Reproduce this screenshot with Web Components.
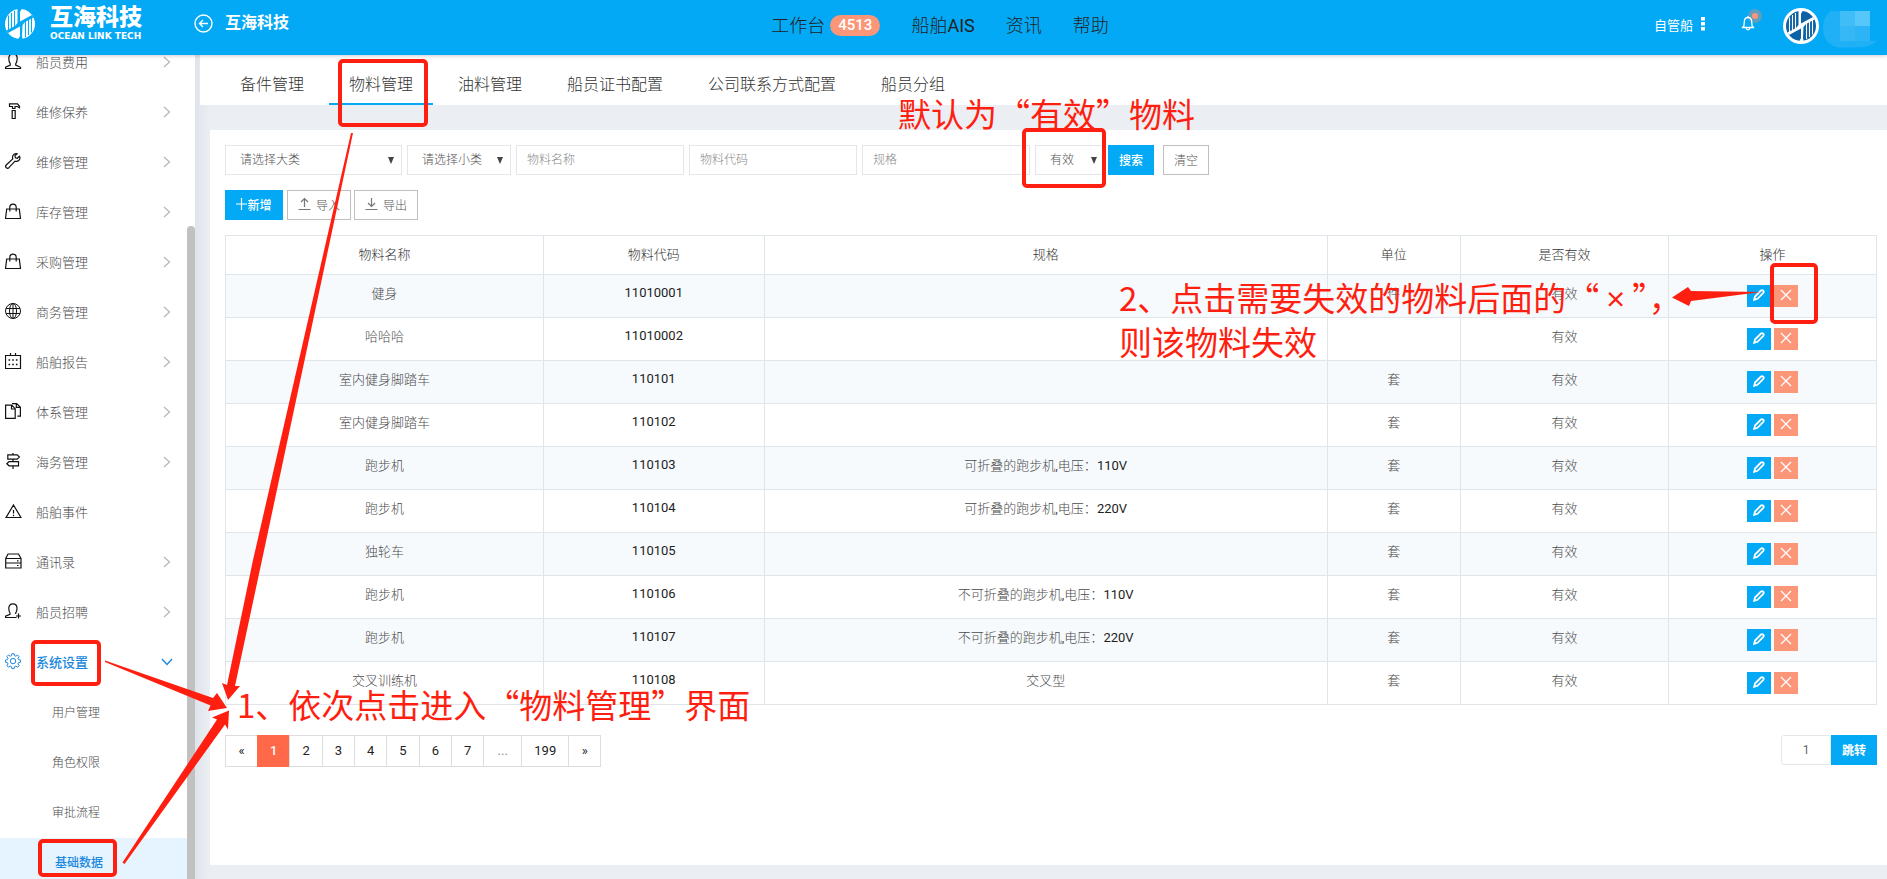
<!DOCTYPE html>
<html lang="zh-CN">
<head>
<meta charset="utf-8">
<title>互海科技</title>
<style>
  html, body { margin: 0; height: 100%; }
  body {
    --strong: Roboto, "Noto Sans CJK SC", sans-serif;
    position: relative;
    font-family: Roboto, "Noto Sans CJK SC Light", "Noto Sans CJK SC", sans-serif;
    font-size: 13px;
    color: #4c4c4c;
    background: #ebeff4;
    overflow: hidden;
  }
</style>
</head>
<body>
<ocean-app></ocean-app>
<note-layer></note-layer>

<script>
const define = (name, html, setup) => {
  const template = document.createElement('template');
  template.innerHTML = '<style>*{box-sizing:border-box}button,input,select{font:inherit;color:inherit;margin:0}a{color:inherit;text-decoration:none}</style>' + html;
  customElements.define(name, class extends HTMLElement {
    constructor() {
      super();
      this.attachShadow({ mode: 'open' }).append(template.content.cloneNode(true));
    }
    connectedCallback() { if (setup) setup(this, this.shadowRoot); }
  });
};

const ICONS = {
  user: '<path d="M.5 15.500v-1.200l4.800-2.200v-1.300C4.200 9.500 3.800 7.500 3.800 5.500 3.800 2.500 5.300.8 8 .8s4.200 1.700 4.200 4.700c0 2-.4 4-1.500 5.300v1.300l4.800 2.200v1.200z"/>',
  hammer: '<path d="M4.500.8h8l2 2.500v1.500l-2.200-1.300H10v2H7.500v-2h-3zM7.200 7.500h3v8h-3z"/>',
  wrench: '<path d="M14.500 3.200l-2.300 2.100-1.800-.6-.5-1.800L12.200.8C10 .2 7.600 1.700 7.500 4.200c0 .7.1 1.200.3 1.700L1.200 12c-1.700 1.800.9 4.400 2.700 2.700L10 8.200c3 .9 6-1.700 4.500-5z"/>',
  bag: '<path d="M1.700 6h12.600l1.200 9.500H.5zM4.800 8.500V4.300a3.200 3.200 0 0 1 6.400 0v4.200"/>',
  globe: '<g stroke-width="1"><circle cx="8" cy="8" r="7.500"/><ellipse cx="8" cy="8" rx="3.500" ry="7.500"/><path d="M8 .5v15M1.200 5.500h13.600M1.200 10.500h13.600"/></g>',
  calendar: '<path d="M.5 2.500h15v13H.5zM5.500 0v2.500M10.500 0v2.500"/><path stroke-width="1.600" d="M3.500 7h1.600m2.100 0h1.600m2.100 0h1.600M3.500 11.500h1.600m2.100 0h1.600m2.100 0h1.600"/>',
  files: '<path d="M.6 2.200h6.200l3.400 3.500v9.700H.6zM6.500 2.200v3.800h3.700M7 .6h4.700l3.700 3.600v9h-3M11.300.8v3.600h4"/>',
  sign: '<path d="M2.800 1.800h9.400l2.200 2.200-2.200 2.200H2.800zM13.500 8.600H4L1.800 10.700 4 12.800h9.500zM8 0v1.800M8 6.200v2.400M8 12.800V16"/>',
  warn: '<path d="M8.500 2l7.400 12.500H1.100zM8.500 7v3.500M8.500 11.800v1.400"/>',
  server: '<path d="M.7 5.500L3 1h10.500L16 5.500M.7 5.500H16v4.500H.7zM.7 10H16v5H.7zM12 7.800h1.500M12 12.500h1.500"/>',
  recruit: '<path d="M11.500 14.500H.5v-1.200l4.500-2V10C4.200 9 3.800 7.200 3.800 5.300 3.800 2.600 5.200.8 7.900.8S12 2.600 12 5.300c0 1.900-.4 3.500-1.300 4.600v1.200M13.500 10.500v5M11 13h5"/>',
  gear: '<path d="M6.900.7h2.200l.5 2 1.200.5 1.800-1.100 1.500 1.500L13 5.400l.5 1.200 2 .5v2.100l-2 .5-.5 1.200 1.100 1.800-1.500 1.500-1.800-1.100-1.200.5-.5 2H6.900l-.5-2-1.200-.5-1.800 1.100-1.500-1.500L3 10.900l-.5-1.200-2-.5V7.100l2-.5L3 5.400 1.900 3.600l1.500-1.500 1.800 1.100 1.200-.5z"/><circle cx="8" cy="8.100" r="2.700"/>'
};

/* Round company mark: striped halves with an S-shaped channel between them */
const MARK = (bg, fg) => `<circle cx="15" cy="15" r="15" fill="${bg}"/>
  <path fill="none" stroke="${fg}" stroke-width="1.100" d="M3.500 6.500v16M6.500 4v17M9.500 2v17.500M26.500 23.500v-16M23.500 26V9M20.500 28V10.500"/>
  <path fill="${fg}" d="M12.500 0h4L15 3v9.500L27 6l1.500 2.500L20 13l-2.500 3-.5 11 .5 3h-4l1.500-3v-9.500L3 24l-1.500-2.500L10 17l2.500-3z"/>`;

define('ocean-app', `
<style>
  :host { display: grid; grid-template-rows: 55px 1fr; height: 100%; }
  .body { display: grid; grid-template-columns: 195px 1fr; min-height: 0; }
  main { display: flex; flex-direction: column; min-width: 0;
    background: linear-gradient(90deg, #dfe4ea, #ebeff4 15px); }
  .panel { flex: 1; margin: 25px 0 14px 15px; padding: 15px 10px 0 15px; background: #fff; }
</style>
<app-header></app-header>
<div class="body">
  <side-menu></side-menu>
  <main>
    <tab-bar></tab-bar>
    <section class="panel">
      <filter-bar></filter-bar>
      <action-bar></action-bar>
      <material-table></material-table>
      <page-nav></page-nav>
    </section>
  </main>
</div>`);

define('app-header', `
<style>
  :host { position: relative; z-index: 1; display: grid; grid-template-columns: 1fr auto 1fr; padding-right: 7px;
    background: #03a9f5; box-shadow: 0 1px 4px rgba(0,0,0,.2); color: #fff; }
  .left, nav, .right { display: flex; align-items: center; height: 48px; }
  .left, .right { font-family: var(--strong); }
  .logo { display: flex; align-items: center; gap: 15px; width: 190px; padding-left: 5px; }
  .brand { display: flex; flex-direction: column; font-weight: 900; font-size: 23px; line-height: 24px; }
  .brand small { font: bold 9px/12px "DejaVu Sans", sans-serif; white-space: nowrap; }
  .back { display: flex; align-items: center; gap: 12px; padding-left: 4px; font-size: 16px; font-weight: bold; line-height: 20px; padding-bottom: 2px; }
  nav { gap: 31px; font-size: 18px; color: #222; }
  nav a { display: flex; align-items: center; gap: 5px; }
  .badge { padding: 0 8px; border-radius: 11px; background: #fb9678; color: #fff; font-size: 15px; line-height: 21px; font-weight: 500; margin-top: 2px; }
  .right { justify-content: flex-end; }
  .fleet { display: flex; align-items: center; gap: 8px; padding: 0; border: 0; background: none; }
  .bell { padding: 0; border: 0; background: none; margin: 0 20px 0 36px; height: 32px; }
  .name { display: block; margin: 10px 0 0 4px; }
  .avatar { margin-top: 4px; }
  svg { display: block; }
</style>
<div class="left">
  <div class="logo">
    <svg width="30" height="30" viewBox="0 0 30 30">${MARK('#fff', '#03a9f5')}</svg>
    <div class="brand">互海科技<small>OCEAN LINK TECH</small></div>
  </div>
  <a class="back" href="#">
    <svg width="19" height="19" fill="none" stroke="#fff" stroke-width="1.400"><circle cx="9.500" cy="9.500" r="8.500"/><path d="M14 9.500H5.500M9 6L5.500 9.500 9 13"/></svg>
    互海科技</a>
</div>
<nav>
  <a href="#">工作台<span class="badge">4513</span></a>
  <a href="#">船舶AIS</a><a href="#">资讯</a><a href="#">帮助</a>
</nav>
<div class="right">
  <button class="fleet">自管船<svg width="4" height="14" fill="#fff"><path d="M0 0h4v3.500H0zM0 5h4v3.500H0zM0 10h4v3.500H0z"/></svg></button>
  <button class="bell" aria-label="通知"><svg width="22" height="32" fill="none">
    <circle cx="14" cy="8" r="7" fill="#5c9fc0"/><circle cx="14" cy="8" r="3" fill="#fb9678"/>
    <path stroke="#fff" stroke-width="1.300" d="M.8 19.500h12.400M2 19.500c1.200-1.500 1.300-3 1.300-5.500 0-3 1.200-4.500 3.700-4.500s3.700 1.500 3.700 4.500c0 2.500.1 4 1.300 5.500M5.200 20c.3 2.400 3.300 2.400 3.600 0M7 8v1.500"/></svg></button>
  <svg class="avatar" width="36" height="36" viewBox="-3 -3 36 36"><circle cx="15" cy="15" r="18" fill="#fff"/>${MARK('#0d62a5', '#fff')}</svg>
  <svg class="name" width="57" height="37"><path fill="#1fb0f5" d="M8 0h38v30h8q-8 7-20 6.500H16Q0 34 0 16 0 6 8 0z"/>
    <path fill="#40bdf7" d="M17 0h15v15H17z"/><path fill="#57c6f9" d="M32 0h15v15H32z"/><path fill="#36b8f6" d="M17 15h15v15H17z"/><path fill="#2cb4f6" d="M32 15h15v15H32z"/></svg>
</div>`);

define('side-menu', `
<style>
  :host { display: grid; grid-template-columns: 1fr 8px; background: #fff; overflow: hidden; min-height: 0; }
  nav { margin-top: -17px; min-height: 0; }
  .thumb { margin-top: 171px; background: #c1c1c1; border-radius: 4px 4px 0 0; }
</style>
<nav></nav><div class="thumb"></div>`, (host, root) => {
  const items = [['user','船员费用'],['hammer','维修保养'],['wrench','维修管理'],['bag','库存管理'],['bag','采购管理'],['globe','商务管理'],
    ['calendar','船舶报告'],['files','体系管理'],['sign','海务管理'],['warn','船舶事件'],['server','通讯录'],['recruit','船员招聘'],['gear','系统设置']];
  root.querySelector('nav').innerHTML = items.map(([icon, text]) =>
    `<menu-item icon="${icon}" arrow="${icon === 'warn' ? '' : icon === 'gear' ? 'down' : 'right'}">${text}</menu-item>`).join('') +
    ['用户管理','角色权限','审批流程','基础数据'].map((t, i) => `<sub-item ${i === 3 ? 'active' : ''}>${t}</sub-item>`).join('');
});

define('menu-item', `
<style>
  :host { display: block; }
  :host([icon=gear]) { color: #1b88e0; font-family: var(--strong); font-weight: 500; }
  a { display: flex; align-items: center; height: 50px; padding: 0 14px 4px 5px; }
  .icon { width: 17px; height: 17px; margin-right: 14px; fill: none; stroke: #111; stroke-width: 1.2; }
  :host([icon=gear]) .icon { stroke: #1b88e0; stroke-width: 1; }
  .arrow { margin: 2px 0 0 auto; fill: none; stroke: #bbb; stroke-width: 1.4; }
  :host([arrow=down]) .arrow { transform: rotate(90deg); stroke: #1b88e0; }
  :host([arrow=""]) .arrow { display: none; }
</style>
<a href="#"><svg class="icon" viewBox="0 0 17 17"></svg><slot></slot>
<svg class="arrow" width="12" height="12"><path d="M3 1l5.500 5L3 11"/></svg></a>`, (host, root) => {
  root.querySelector('.icon').innerHTML = ICONS[host.getAttribute('icon')];
});

define('sub-item', `
<style>
  :host { display: block; font-size: 12px; }
  a { display: block; padding-left: 52px; line-height: 50px; }
  :host([active]) { background: #e6f4ff; color: #1b88e0; font-family: var(--strong); font-weight: 500; }
  :host([active]) a { padding-left: 55px; }
</style>
<a href="#"><slot></slot></a>`);

define('tab-bar', `
<style>
  :host { display: flex; gap: 5px; height: 50px; margin-left: 5px; padding-left: 20px; background: #fff; color: #333; font-size: 16px; }
  a { padding: 10px 20px 0; line-height: 40px; height: 50px; border-bottom: 2px solid transparent; white-space: nowrap; }
  a[aria-current] { border-color: #03a9f5; }
</style>
<a href="#">备件管理</a><a href="#" aria-current="page">物料管理</a><a href="#">油料管理</a><a href="#">船员证书配置</a><a href="#">公司联系方式配置</a><a href="#">船员分组</a>`);

define('filter-bar', `
<style>
  :host { display: flex; gap: 5px; height: 30px; font-size: 12px; color: #555; }
  .pick { display: grid; width: 104px; }
  .pick.wide { width: 177px; }
  .pick.short { width: 70px; }
  .pick > * { grid-area: 1 / 1; }
  .pick svg { place-self: center end; margin-right: 8px; pointer-events: none; fill: #444; }
  select { appearance: none; width: 100%; padding: 0 14px; border: 1px solid #e4e7ea; border-radius: 0; background: #fff; }
  input { width: 168px; padding: 0 10px; border: 1px solid #e4e7ea; border-radius: 0; background: #fff; }
  input::placeholder { color: #888; opacity: 1; }
  button { width: 46px; padding: 0 0 2px; border: 1px solid #bfbfbf; background: #fff; }
  .go { background: #03a9f5; border-color: #03a9f5; color: #fff; font-family: var(--strong); font-weight: 500; margin: 0 4px 0 -2px; }
</style>
<label class="pick wide"><select aria-label="大类"><option>请选择大类</option></select><svg width="6" height="7"><path d="M0 0h6L3 7z"/></svg></label>
<label class="pick"><select aria-label="小类"><option>请选择小类</option></select><svg width="6" height="7"><path d="M0 0h6L3 7z"/></svg></label>
<input placeholder="物料名称" aria-label="物料名称">
<input placeholder="物料代码" aria-label="物料代码">
<input placeholder="规格" aria-label="规格">
<label class="pick short"><select aria-label="是否有效"><option>有效</option></select><svg width="6" height="7"><path d="M0 0h6L3 7z"/></svg></label>
<button class="go">搜索</button><button>清空</button>`);

define('action-bar', `
<style>
  :host { display: flex; gap: 3px; height: 30px; margin: 15px 0; font-size: 12px; color: #555; }
  button { display: flex; align-items: center; justify-content: center; gap: 5px; width: 64px; padding: 0 0 2px; border: 1px solid #bfbfbf; background: #fff; }
  .add { width: 58px; margin-right: 1px; gap: 0; background: #03a9f5; border-color: #03a9f5; color: #fff; font-family: var(--strong); font-weight: 500; }
  svg { fill: none; stroke: #777; stroke-width: 1.2; }
  .add svg { stroke: #fff; }
</style>
<button class="add"><svg width="11" height="12"><path d="M0 6h11M5.500 0v12"/></svg>新增</button>
<button><svg width="13" height="14"><path d="M.5 12.500h12M6.500 10V1.500M3 5l3.500-3.500L10 5"/></svg>导入</button>
<button><svg width="13" height="14"><path d="M.5 12.500h12M6.500 1v8.500M3 6l3.500 3.500L10 6"/></svg>导出</button>`);

define('material-table', `
<style>
  :host { display: block; }
  table { width: 100%; table-layout: fixed; border-collapse: collapse; }
  th, td { border: 1px solid #e0e5ea; padding: 0; text-align: center; }
  th { height: 39px; padding-bottom: 4px; font-weight: 400; color: #333; }
  td { height: 43px; padding-bottom: 7px; }
  td:last-child { padding: 0; }
  b { font-weight: 400; color: #222; }
  tbody tr:nth-child(odd) { background: #f6fafd; }
  .ops { display: flex; justify-content: center; gap: 3px; }
  button { display: grid; place-items: center; width: 24px; height: 22px; padding: 0 0 2px; border: 0; background: #03a9f5; }
  button + button { background: #fb9678; }
  svg { fill: none; stroke: #fff; }
  .n { width: 19.25% } .c { width: 13.38% } .s { width: 34.1% } .u { width: 8.07% } .v { width: 12.6% }
</style>
<table>
<thead><tr><th class="n">物料名称</th><th class="c">物料代码</th><th class="s">规格</th><th class="u">单位</th><th class="v">是否有效</th><th>操作</th></tr></thead>
<tbody></tbody></table>`, (host, root) => {
  const rows = [['健身','11010001','','件'],['哈哈哈','11010002','',''],['室内健身脚踏车','110101','','套'],['室内健身脚踏车','110102','','套'],
    ['跑步机','110103','可折叠的跑步机,电压：<b>110V</b>','套'],['跑步机','110104','可折叠的跑步机,电压：<b>220V</b>','套'],['独轮车','110105','','套'],
    ['跑步机','110106','不可折叠的跑步机,电压：<b>110V</b>','套'],['跑步机','110107','不可折叠的跑步机,电压：<b>220V</b>','套'],['交叉训练机','110108','交叉型','套']];
  root.querySelector('tbody').innerHTML = rows.map(r => `<tr><td>${r[0]}</td><td><b>${r[1]}</b></td><td>${r[2]}</td><td>${r[3]}</td><td>有效</td>
    <td><div class="ops"><button aria-label="编辑"><svg width="12" height="12"><path stroke-width="1.800" d="M1.200 10.800l.8-3.300L8 1.500c1.500-1.200 3.500.8 2.300 2.300L4.500 9.800z"/></svg></button>
    <button aria-label="失效"><svg width="12" height="12"><path stroke-width="1.300" d="M1 1l10 10M11 1L1 11"/></svg></button></div></td></tr>`).join('');
});

define('page-nav', `
<style>
  :host { display: flex; justify-content: space-between; margin-top: 30px; color: #222; }
  nav { display: flex; }
  a, span { min-width: 33px; height: 32px; padding: 0 12px; margin-right: -1px; border: 1px solid #ddd; text-align: center; line-height: 29px; }
  a[aria-current] { background: #ff6849; border-color: #ff6849; color: #fff; font-weight: 500; }
  span { color: #888; min-width: 39px; }
  form { display: flex; height: 30px; font-size: 12px; }
  input { width: 50px; border: 1px solid #e4e7ea; border-radius: 3px; text-align: center; color: #666; }
  button { width: 46px; padding: 0 0 2px; border: 0; background: #03a9f5; color: #fff; font-family: var(--strong); font-weight: bold; }
</style>
<nav aria-label="分页"><a href="#">«</a><a href="#" aria-current="page">1</a><a href="#">2</a><a href="#">3</a><a href="#">4</a><a href="#">5</a><a href="#">6</a><a href="#">7</a><span>...</span><a href="#">199</a><a href="#">»</a></nav>
<form onsubmit="return false"><input value="1" aria-label="页码"><button>跳转</button></form>`);

/* Hand-drawn notes that lie over the whole page */
define('note-layer', `
<style>
  :host { position: absolute; inset: 0; z-index: 2; pointer-events: none; overflow: hidden;
    color: #ff1f10; font: 33px/43px "Noto Sans CJK SC", sans-serif; }
  svg { position: absolute; left: 0; top: 0; }
  p { position: absolute; margin: 0; white-space: nowrap; }
  .rule { left: 898px; top: 92px; }
  .steps { left: 237px; top: 683px; }
  .void { left: 1119px; top: 276px; }
  .void span { font-family: "Open Sans", sans-serif; padding: 0 7px; }
</style>
<svg width="1887" height="879" fill="none" stroke="#ff1f10" stroke-width="4">
  <rect x="340" y="61" width="86" height="64" rx="3"/>
  <rect x="1024" y="130" width="80" height="56" rx="3"/>
  <rect x="1772" y="265" width="44" height="57" rx="3"/>
  <rect x="33" y="642" width="66" height="42" rx="3"/>
  <rect x="40" y="841" width="75" height="34" rx="3"/>
  <g fill="#ff1f10" stroke="none">
    <path d="M351 133h2L262 560 235 686l5 0-12 14-6-17 5 2L253 560z"/>
    <path d="M105 660.500L213 698l4-5 10 15-19 3 2.500-5.500L105 662z"/>
    <path d="M122.500 862.500L217 719.500l-5-2 17-7-1 19-3-5L124.500 864z"/>
    <path d="M1761 292l-70-1-3-4-16 10.500 17 8.500 2-5z"/>
  </g>
</svg>
<p class="rule">默认为“有效”物料</p>
<p class="steps">1、依次点击进入“物料管理”界面</p>
<p class="void">2、点击需要失效的物料后面的“<span>×</span>”，<br>则该物料失效</p>`);
</script>
</body>
</html>
